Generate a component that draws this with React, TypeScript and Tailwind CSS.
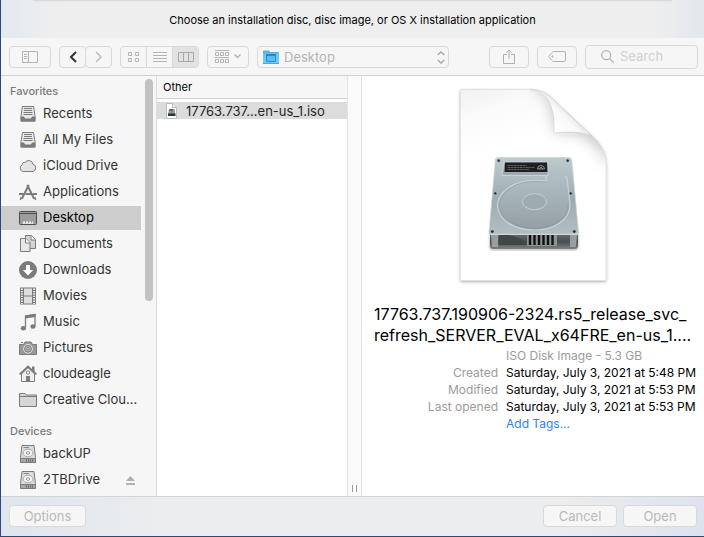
import type { ReactNode } from "react";

const gray = "#7b7b7b";

function Glyph({ children }: { children: ReactNode }) {
  return (
    <svg viewBox="0 0 18 18" className="h-[18px] w-[18px] shrink-0" fill="none" stroke={gray} aria-hidden="true">
      {children}
    </svg>
  );
}

const TrayIcon = () => (
  <Glyph>
    <path d="M3.5 1.5h11l1.5 9v5.5H2v-5.5z" fill="#e9e9e9" />
    <path d="M5 3.500h8M5 5.500h8M4.500 7.500h9M4.500 9.500h9" strokeWidth="1" />
    <path d="M1.600 11.400h3.200l1.400 2h5.600l1.400-2h3.200v5H1.600z" fill={gray} stroke="none" />
  </Glyph>
);

const CloudIcon = () => (
  <Glyph>
    <path
      d="M4.2 14.5a3.400 3.400 0 0 1-1-6.500 2.300 2.300 0 0 1 3-2.600 4.200 4.200 0 0 1 7.700 1.800 3.800 3.800 0 0 1 .2 7.300z"
      fill="#e4e4e4"
    />
  </Glyph>
);

const AppsIcon = () => (
  <Glyph>
    <path d="M8.200 2 15 15.500M9.800 2 3 15.500" strokeWidth="2" />
    <path d="M0 11h4.500M6.500 11h6M13.800 11H18" strokeWidth="2" />
    <path d="m1.200 16.600.6-2.200 1.600.8zM16.800 16.600l-.6-2.200-1.600.8z" fill={gray} />
  </Glyph>
);

const DesktopIcon = () => (
  <Glyph>
    <rect x=".5" y="2.500" width="17" height="13" rx="1" fill="#9c9c9c" stroke="#4e4e4e" />
    <path d="M1 4.500h16" stroke="#4e4e4e" />
    <path d="M4 14.500v-2h2v2zM7 14.500v-2h2v2zM10 14.500v-2h2v2zM13 14.500v-2h1v2z" fill="#eee" stroke="none" />
    <path d="M3.500 14.500h11" stroke="#ddd" />
  </Glyph>
);

const DocsIcon = () => (
  <Glyph>
    <path d="M6.500.5h6l4 4v9h-10z" fill="#d4d4d4" />
    <path d="M12 .5v4.500h4.500" fill="#fff" />
    <path d="M1.500 3.500h5.500l4 4v9h-9.500z" fill="#e7e7e7" />
    <path d="M6.500 3.500V8H11" fill="#fff" />
  </Glyph>
);

const DownIcon = () => (
  <Glyph>
    <circle cx="9" cy="9" r="9" fill={gray} stroke="none" />
    <path d="M7 4h4v5h3.200L9 14.400 3.800 9H7z" fill="#fff" stroke="none" />
  </Glyph>
);

const FilmIcon = () => (
  <Glyph>
    <path d="M1 .5h16v17H1z" fill={gray} stroke="none" />
    <path d="M5 1.500h8v7H5zM5 9.500h8v7H5z" fill="#dedede" stroke="none" />
    <path d="M2.900 1.500v15.500M15.100 1.500v15.500" stroke="#fff" strokeWidth="1.600" strokeDasharray="1.400 1" />
  </Glyph>
);

const MusicIcon = () => (
  <Glyph>
    <path d="M6.500 14.500V3l9.500-1.500v11.500" strokeWidth="1.300" />
    <path d="M6 2.400 16.600.7v3.200L6 5.600z" fill={gray} stroke="none" />
    <ellipse cx="4.400" cy="15.200" rx="2.600" ry="2.200" fill={gray} stroke="none" />
    <ellipse cx="14" cy="13.500" rx="2.600" ry="2.200" fill={gray} stroke="none" />
  </Glyph>
);

const CameraIcon = () => (
  <Glyph>
    <path d="M.5 5.500h4L6 3h6l1.500 2.500h4v10H.5z" fill="#999" />
    <path d="M2 3.500h2" strokeWidth="1" />
    <circle cx="9" cy="9.800" r="4.300" fill="#d5d5d5" stroke="#e8e8e8" />
    <circle cx="9" cy="9.800" r="3.400" fill="#b5b5b5" />
    <circle cx="9" cy="9.800" r="1.300" fill="#e6e6e6" />
  </Glyph>
);

const HouseIcon = () => (
  <Glyph>
    <path d="M13 1.500h2.500V7L13 5z" fill={gray} stroke="none" />
    <path d="M2.500 9v7.500h13V9L9 2.500z" fill="#eee" />
    <path d="M.6 9.400 9 1.600l8.400 7.800" strokeWidth="1.800" />
    <path d="M7 11h4v6H7z" fill={gray} stroke="none" />
    <rect x="7.500" y="6" width="3" height="3" rx=".8" fill="#fff" />
  </Glyph>
);

const FolderIcon = () => (
  <Glyph>
    <path d="M.5 15.500v-13h5.500l1.200 1.500h10.300v11.500z" fill="#d6d6d6" />
    <path d="M1 5.500h16" />
  </Glyph>
);

const DriveIcon = () => (
  <Glyph>
    <path d="M3 .5h12l1.500 12v4.500h-15v-4.500z" fill="#dcdcdc" />
    <path d="M1.500 13.500h15v4h-15z" fill="#a5a5a5" stroke={gray} />
    <path d="M7 15.500h8" stroke="#666" strokeWidth="2" strokeDasharray="1 1" />
    <path d="M4.500 2.500h5.500" stroke="#8a8a8a" />
    <ellipse cx="9" cy="8" rx="5" ry="3.800" fill="#f2f2f2" stroke="#aaa" />
    <ellipse cx="9" cy="8" rx="1.700" ry="1.300" fill="#fff" stroke="#999" />
  </Glyph>
);

const favorites: { name: string; Icon: () => ReactNode }[] = [
  { name: "Recents", Icon: TrayIcon },
  { name: "All My Files", Icon: TrayIcon },
  { name: "iCloud Drive", Icon: CloudIcon },
  { name: "Applications", Icon: AppsIcon },
  { name: "Desktop", Icon: DesktopIcon },
  { name: "Documents", Icon: DocsIcon },
  { name: "Downloads", Icon: DownIcon },
  { name: "Movies", Icon: FilmIcon },
  { name: "Music", Icon: MusicIcon },
  { name: "Pictures", Icon: CameraIcon },
  { name: "cloudeagle", Icon: HouseIcon },
  { name: "Creative Clou...", Icon: FolderIcon },
];

const details = [
  ["Created", "Saturday, July 3, 2021 at 5:48 PM"],
  ["Modified", "Saturday, July 3, 2021 at 5:53 PM"],
  ["Last opened", "Saturday, July 3, 2021 at 5:53 PM"],
];

function Place({ name, Icon, selected = false }: { name: string; Icon: () => ReactNode; selected?: boolean }) {
  return (
    <button
      type="button"
      className={`flex h-6 w-full items-center gap-1.5 pl-[18px] text-left whitespace-nowrap ${
        selected ? "bg-[#cdcdcd] text-black" : "text-[#333]"
      }`}
    >
      <Icon />
      {name}
    </button>
  );
}

const toolButton = "flex h-[22px] shrink-0 items-center justify-center rounded border border-[#d9d9d9]";

function Toolbar() {
  return (
    <div className="flex h-[38px] shrink-0 items-center gap-2 border-b border-[#d1d1d1] bg-[#f6f6f6] pr-1.5 pl-2">
      <button type="button" aria-label="Toggle sidebar" className={`${toolButton} w-[42px]`}>
        <svg width="16" height="12" fill="none" stroke="#b4b4b4" aria-hidden="true">
          <path d="M.5.5h15v11H.5zM6.500.5v11M2 3.500h3M2 5.500h3M2 7.500h3" />
        </svg>
      </button>
      <div className="flex shrink-0">
        <button type="button" aria-label="Back" className={`${toolButton} w-[27px]`}>
          <svg width="8" height="12" fill="none" stroke="#333" strokeWidth="2" aria-hidden="true">
            <path d="M7 1 2 6l5 5" />
          </svg>
        </button>
        <button type="button" aria-label="Forward" className={`${toolButton} -ml-px w-[27px]`}>
          <svg width="8" height="12" fill="none" stroke="#bdbdbd" strokeWidth="1.500" aria-hidden="true">
            <path d="m1 1 5 5-5 5" />
          </svg>
        </button>
      </div>
      <div className="flex h-[22px] w-[79px] shrink-0 divide-x divide-[#d9d9d9] overflow-hidden rounded border border-[#d9d9d9]">
        <button type="button" aria-label="Icon view" className="flex flex-1 items-center justify-center">
          <svg width="11" height="10" fill="none" stroke="#b4b4b4" aria-hidden="true">
            <path d="M.5.500h3v3h-3zM7.500.500h3v3h-3zM.5 6.500h3v3h-3zM7.500 6.500h3v3h-3z" />
          </svg>
        </button>
        <button type="button" aria-label="List view" className="flex flex-1 items-center justify-center">
          <svg width="14" height="10" stroke="#b4b4b4" aria-hidden="true">
            <path d="M0 .5h14M0 3.500h14M0 6.500h14M0 9.500h14" />
          </svg>
        </button>
        <button type="button" aria-label="Column view" aria-pressed="true" className="flex flex-1 items-center justify-center bg-[#e2e2e2]">
          <svg width="16" height="10" fill="none" stroke="#a9a9a9" aria-hidden="true">
            <path d="M.5.5h15v9H.5zM5.500.5v9M10.500.5v9" />
          </svg>
        </button>
      </div>
      <button type="button" aria-label="Group items" className={`${toolButton} w-[42px] gap-1`}>
        <svg width="15" height="13" fill="none" stroke="#b4b4b4" aria-hidden="true">
          <path d="M0 .5h14M.5 2.500h3v3h-3zM5.500 2.500h3v3h-3zM10.500 2.500h3v3h-3zM0 7.500h14M.5 9.500h3v3h-3zM5.500 9.500h3v3h-3zM10.500 9.500h3v3h-3z" />
        </svg>
        <svg width="7" height="5" fill="none" stroke="#b4b4b4" strokeWidth="1.500" aria-hidden="true">
          <path d="m.5.500 3 3 3-3" />
        </svg>
      </button>
      <div className="relative w-[192px]">
        <select
          aria-label="Location"
          className="block h-[22px] w-full appearance-none rounded border border-[#d9d9d9] bg-transparent pl-[26px] text-[13px] leading-5 text-[#b4b4b4]"
        >
          <option>Desktop</option>
        </select>
        <svg width="16" height="14" className="pointer-events-none absolute top-1 left-1.5" aria-hidden="true">
          <path d="M0 1.500Q0 .5 1 .5h5l1 1.500h8q1 0 1 1V14H0z" fill="#58b5e5" />
          <path d="M0 3.500h16V14H0z" fill="#6cc8f4" />
          <path d="M3.500 4.500h9v7h-9z" fill="#58bdf0" stroke="#2993cd" />
          <path d="M3 5h10" stroke="#2589c2" strokeWidth="2" />
          <path d="M0 13.500h16" stroke="#49a8dc" />
        </svg>
        <svg width="8" height="13" fill="none" stroke="#a8a8a8" strokeWidth="1.300" className="pointer-events-none absolute top-[5px] right-1" aria-hidden="true">
          <path d="m.7 4 3.300-3 3.300 3M.7 9 4 12l3.300-3" />
        </svg>
      </div>
      <button type="button" aria-label="Share" className={`${toolButton} ml-auto w-10`}>
        <svg width="12" height="16" fill="none" stroke="#b0b0b0" aria-hidden="true">
          <path d="M4 5.500H.5v9h11v-9H8M6 10V1M3.300 3.700 6 1l2.700 2.700" />
        </svg>
      </button>
      <button type="button" aria-label="Edit tags" className={`${toolButton} w-10`}>
        <svg width="18" height="11" fill="none" stroke="#b0b0b0" aria-hidden="true">
          <path d="M5.500.5H16q1.500 0 1.500 1.500v7q0 1.500-1.500 1.500H5.500Q4.500 10.500.7 5.500 4.500.5 5.500.5z" />
          <circle cx="4.500" cy="5.500" r=".7" />
        </svg>
      </button>
      <label className="flex h-6 w-[113px] shrink-0 items-center gap-1.5 rounded border border-[#d9d9d9] pl-[15px]">
        <svg width="13" height="13" fill="none" stroke="#b4b4b4" strokeWidth="1.300" className="shrink-0" aria-hidden="true">
          <circle cx="5.200" cy="5.200" r="4.500" />
          <path d="m8.500 8.500 4 4" />
        </svg>
        <input type="search" aria-label="Search" placeholder="Search" className="w-full min-w-0 bg-transparent text-[13px] outline-none placeholder:text-[#d0d0d0]" />
      </label>
    </div>
  );
}

function DiskImage() {
  return (
    <svg viewBox="452 84 164 204" className="mx-auto block h-[204px] w-[164px]" role="img" aria-label="Disk image">
      <defs>
        <linearGradient id="paper" x1="0" y1="0" x2=".25" y2="1">
          <stop offset="0" stopColor="#f0f0f0" />
          <stop offset=".14" stopColor="#fafafa" />
          <stop offset=".35" stopColor="#fff" />
        </linearGradient>
        <filter id="soft" x="-50%" y="-50%" width="200%" height="200%">
          <feGaussianBlur stdDeviation="7" />
        </filter>
        <linearGradient id="curl" gradientUnits="userSpaceOnUse" x1="554" y1="132" x2="574" y2="112">
          <stop offset="0" stopColor="#fff" />
          <stop offset=".6" stopColor="#fafafa" />
          <stop offset="1" stopColor="#dedede" />
        </linearGradient>
        <linearGradient id="metal" x1="0" y1="0" x2="0" y2="1">
          <stop offset="0" stopColor="#bdcace" />
          <stop offset=".55" stopColor="#9eabb0" />
          <stop offset="1" stopColor="#b3bec2" />
        </linearGradient>
        <linearGradient id="platter" x1="0" y1="0" x2="0" y2="1">
          <stop offset="0" stopColor="#b0bfc5" />
          <stop offset="1" stopColor="#949fa3" />
        </linearGradient>
        <linearGradient id="front" x1="0" y1="0" x2="0" y2="1">
          <stop offset="0" stopColor="#727779" />
          <stop offset=".6" stopColor="#4b4d4e" />
          <stop offset="1" stopColor="#7d8183" />
        </linearGradient>
        <filter id="drop" x="-10%" y="-10%" width="120%" height="120%">
          <feDropShadow dx="0" dy="1" stdDeviation="1.500" floodOpacity=".35" />
        </filter>
        <clipPath id="sheet">
          <path d="M460.500 89.500H530q13 0 21 8L592 136q14 12 14 28v116.500H460.500z" />
        </clipPath>
      </defs>
      <path d="M460.500 89.500H530q13 0 21 8L592 136q14 12 14 28v116.500H460.500z" fill="url(#paper)" stroke="#d6d6d6" strokeWidth=".5" filter="url(#drop)" />
      <g clipPath="url(#sheet)">
        <path d="M528 87q26 0 26 46 40-6 54 34l6-60-50-30z" fill="#b4b4b4" opacity=".75" filter="url(#soft)" />
      </g>
      <path d="M530 89.500q13 0 21 8L592 136q-14-6-38-3 2-41-24-43.500z" fill="url(#curl)" stroke="#c6c6c6" strokeWidth=".5" />
      <path d="M490 231h88v15q0 3-3 3h-82q-3 0-3-3z" fill="url(#front)" filter="url(#drop)" />
      <path d="M499 234q22 1 29 11h-29z" fill="#434647" />
      <path d="M527 235h30v11h-30z" fill="#8d9293" />
      <path d="M530 235v10M534.500 235v10M539 235v10M543.500 235v10M548 235v10M552.500 235v10" stroke="#111" strokeWidth="2.400" />
      <path d="M491 235h7v12h-6zM570 235h7l-1 12h-6z" fill="#979fa2" />
      <path d="M498 157.500h71q2.500 0 2.800 2.500l6.700 72q.2 2.500-2.500 2.500H491.500q-2.700 0-2.500-2.500l6.300-72q.2-2.500 2.700-2.500z" fill="url(#metal)" stroke="#ccd5d8" strokeWidth=".7" />
      <path d="M489.500 234.300h88.500" stroke="#d5dcde" strokeWidth="1" />
      <path d="m504 162-2 13.500h46L548 162z" fill="#9caab0" stroke="#d0dadd" strokeWidth=".8" />
      <path d="M505 162.500h42l.500 9.500h-43z" fill="#1d1f20" />
      <path d="M507.500 165.500h19M507.500 167.500h27M507.500 169.500h22" stroke="#8a8a8a" strokeWidth=".6" strokeDasharray="3 .6 2 .5" />
      <path d="M537.500 169a3.500 3.500 0 0 1 7 0zM539.500 169l1.500-2 1.500 2" fill="none" stroke="#aaa" strokeWidth=".8" />
      <path d="M546 176v5q-24-3-38 7-11 8-10.500 18c1 15 18 24 37 24s36-10 35.500-26L567 178l-1.500-1.500" fill="url(#platter)" stroke="#c8d3d7" strokeWidth="1.200" />
      <path d="M546 182q-24-3-37 7-10 8-9.500 17c1 13 17 22 35 22s34-9 33.500-24" fill="none" stroke="#7e8b91" strokeWidth=".4" />
      <ellipse cx="534.500" cy="201.700" rx="12" ry="8" fill="#9eabb0" stroke="#c5ced1" />
      <g fill="#26353d" stroke="#cbd6da" strokeWidth=".5">
        <circle cx="498.700" cy="160.700" r="1.600" />
        <circle cx="567.700" cy="160.700" r="1.600" />
        <circle cx="495.300" cy="193.300" r="1.600" />
        <circle cx="570.700" cy="193.300" r="1.600" />
        <circle cx="492.300" cy="231.500" r="1.800" />
        <circle cx="574.300" cy="231.500" r="1.800" />
      </g>
    </svg>
  );
}

const groupHeading = "h-5 pl-[9px] text-[11px] leading-[19px] font-medium text-[#7a7a7a]";

function Sidebar() {
  return (
    <nav aria-label="Places" className="flex w-[156px] shrink-0 border-r border-[#dcdcdc] bg-[#f6f6f6] text-[13px]">
      <div className="w-[140px] pt-1.5">
        <h2 className={groupHeading}>Favorites</h2>
        <ul className="flex flex-col gap-0.5">
          {favorites.map((f) => (
            <li key={f.name}>
              <Place {...f} selected={f.name === "Desktop"} />
            </li>
          ))}
        </ul>
        <h2 className={`${groupHeading} mt-2.5`}>Devices</h2>
        <ul className="flex flex-col gap-0.5">
          <li>
            <Place name="backUP" Icon={DriveIcon} />
          </li>
          <li className="flex items-center pr-1.5">
            <Place name="2TBDrive" Icon={DriveIcon} />
            <button type="button" aria-label="Eject 2TBDrive">
              <svg width="9" height="9" fill="#b0b0b0" aria-hidden="true">
                <path d="M4.500 0 9 5H0zM0 7h9v2H0z" />
              </svg>
            </button>
          </li>
        </ul>
      </div>
      <div className="mt-[3px] ml-1 h-[222px] w-2 rounded-full bg-[#c2c2c2]" />
    </nav>
  );
}

const footButton = "h-[22px] rounded border border-[#d9d9d9] bg-[#f6f6f6] text-[13px] leading-5 text-[#b9b9b9]";

export default function App() {
  return (
    <div className="flex min-h-screen flex-col border-b border-l border-[#2c4a78] bg-white font-[Inter,'Liberation_Sans',sans-serif]">
      <header className="flex h-[38px] shrink-0 flex-col bg-[linear-gradient(90deg,#e4e9f0,#eeeeee_8%,#eeeeee_93%,#e2e7ee)]">
        <div className="mx-8 h-px bg-[#dadada] shadow-xs" />
        <h1 className="pt-[11px] text-center text-[11px] leading-4 text-black">
          Choose an installation disc, disc image, or OS X installation application
        </h1>
      </header>
      <Toolbar />
      <main className="flex flex-1">
        <Sidebar />
        <section aria-label="Files" className="w-[190px] shrink-0">
          <h2 className="h-[23px] border-b border-[#d0d0d0] bg-[#f6f6f6] pl-1.5 text-[11px] leading-[22px] text-black">Other</h2>
          <button type="button" className="mt-[3px] flex h-[17px] w-full items-center gap-2 bg-[#dcdcdc] pl-2 text-[13px] leading-[18px] whitespace-nowrap text-[#262626]">
            <svg width="13" height="16" aria-hidden="true" className="shrink-0">
              <path d="M1.500.5h6l4 4v11h-10z" fill="#fff" stroke="#bbb" />
              <path d="M7.500.5v4h4" fill="#eee" stroke="#bbb" />
              <path d="M4 6h5.500l.8 5H3.200z" fill="#8b989d" />
              <path d="M4.500 6.500h3.500v1H4.500zM3 10.500h7.500V13H3z" fill="#333" />
            </svg>
            17763.737…en-us_1.iso
          </button>
        </section>
        <div className="flex w-[15px] shrink-0 items-end justify-center gap-[3px] border-x border-[#e2e2e2] bg-[#fafafa] pb-1">
          <span className="h-[7px] w-px bg-[#9a9a9a]" />
          <span className="h-[7px] w-px bg-[#9a9a9a]" />
        </div>
        <section aria-label="Preview" className="min-w-0 flex-1 pt-2 pr-2.5 pl-3">
          <DiskImage />
          <h2 className="mt-4 text-[16px] leading-[21px] whitespace-nowrap text-black">
            17763.737.190906-2324.rs5_release_svc_
            <br />
            refresh_SERVER_EVAL_x64FRE_en-us_1....
          </h2>
          <div className="pt-px text-[12px] leading-[17px] whitespace-nowrap">
            <p className="pl-[132px] text-[#9b9b9b]">ISO Disk Image - 5.3 GB</p>
            <dl className="grid grid-cols-[124px_1fr] gap-x-2">
              {details.map(([label, value]) => (
                <div key={label} className="contents">
                  <dt className="text-right text-[#9b9b9b]">{label}</dt>
                  <dd className="text-black">{value}</dd>
                </div>
              ))}
            </dl>
            <a href="#tags" className="ml-[132px] block text-[#2f80f5]">
              Add Tags...
            </a>
          </div>
        </section>
      </main>
      <footer className="flex h-10 shrink-0 items-center gap-1.5 border-t border-[#d3d3d3] bg-[linear-gradient(90deg,#dfe5ee,#ebedee_22%,#ebedee_80%,#dde3ed)] pr-[7px] pb-0.5 pl-2">
        <button type="button" className={`${footButton} w-[77px]`}>Options</button>
        <button type="button" className={`${footButton} ml-auto w-[74px]`}>Cancel</button>
        <button type="button" className={`${footButton} w-[74px]`}>Open</button>
      </footer>
    </div>
  );
}
